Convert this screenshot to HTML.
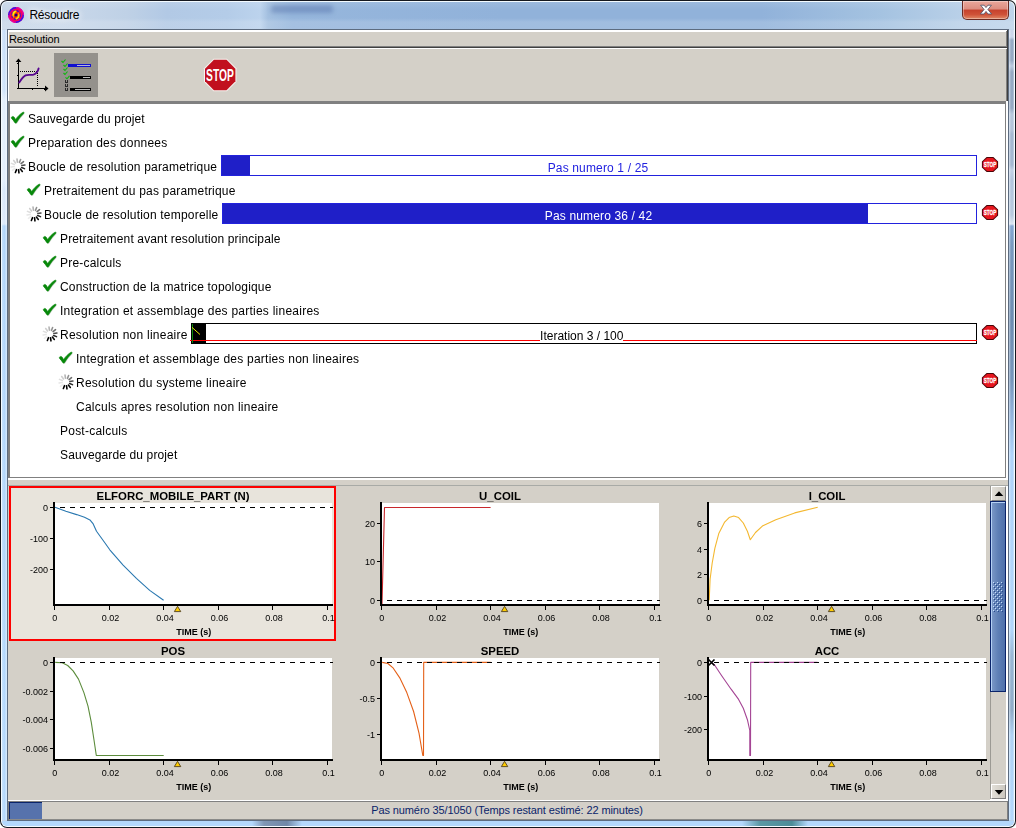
<!DOCTYPE html><html><head><meta charset="utf-8"><title>Résoudre</title><style>
*{box-sizing:border-box;margin:0;padding:0}
html,body{width:1016px;height:828px;overflow:hidden;background:#fff}
body{font-family:"Liberation Sans",sans-serif;font-size:12px;color:#000;position:relative}
.abs{position:absolute}
#win{position:absolute;left:0;top:0;width:1016px;height:828px;border-radius:7px 7px 7px 7px;background:#15181f;overflow:hidden}
#glass{position:absolute;left:1px;top:1px;right:1px;bottom:1px;border-radius:6px;background:#f4fbff}
#glass2{position:absolute;left:2px;top:2px;right:2px;bottom:2px;border-radius:5px;
 background:linear-gradient(180deg,rgba(255,255,255,.10) 0px,rgba(255,255,255,0) 8px,rgba(255,255,255,0) 16px,rgba(255,255,255,.14) 20px,rgba(255,255,255,.14) 27px,rgba(255,255,255,0) 28px),linear-gradient(90deg,#c8d7e8 0px,#c9d8ea 60px,#bfd1e6 125px,#b2c9e5 165px,#b4cce8 225px,#bcd3ed 258px,#a4c0e0 266px,#96b6dc 290px,#91b2da 500px,#91b2da 760px,#a5c3e1 880px,#b9d0e8 960px,#bed4ea 1012px)}
#blur1{position:absolute;left:271px;top:5px;width:62px;height:8px;background:rgba(70,100,160,.38);filter:blur(2px);border-radius:3px}
#sideL{position:absolute;left:2px;top:30px;width:5px;bottom:8px;background:linear-gradient(90deg,rgba(255,255,255,.25),rgba(255,255,255,0) 50%,rgba(255,255,255,.5) 100%),linear-gradient(180deg,#c8def8 0px,#cfe3fa 60px,#e2eefc 70px,#e2eefc 150px,#d8e8fb 160px,#dce9fb 194px,#b2d6fb 196px,#b4d8fc 100%)}
#sideR{position:absolute;left:1009px;top:30px;width:5px;bottom:8px;background:linear-gradient(90deg,rgba(255,255,255,.5),rgba(255,255,255,0) 40%,rgba(255,255,255,0) 80%,rgba(255,255,255,.45) 100%),linear-gradient(180deg,#ccd6ea 0px,#cdd7eb 7px,#98acc6 10px,#96aac4 30px,#bccbe0 36px,#96aac4 42px,#96aac4 78px,#b8c8dc 84px,#b4c4da 100px,#a5b9d2 104px,#a5b9d2 135px,#c3d2e6 140px,#b4c6de 150px,#b8cade 185px,#dbe5f2 194px,#86a8d4 196px,#7a9abf 215px,#6e8db2 290px,#7897bc 350px,#8fb0d8 380px,#b0d4fa 425px,#b2d6fb 600px,#9ab8d6 625px,#90acc8 680px,#b0d2f4 705px,#b4d8fc 100%)}
#sideB{position:absolute;left:2px;top:821px;width:1012px;height:5px;background:linear-gradient(90deg,#b4d8fc 250px,#8096b4 262px,#7088a8 285px,#b4d8fc 300px,#b4d8fc 740px,#5a98a4 758px,#4c8c98 790px,#b4d8fc 806px);border-radius:0 0 5px 5px}
#cframe{position:absolute;left:7px;top:29px;width:1002px;height:792px;background:#5d6c80}
#client{position:absolute;left:8px;top:30px;width:1000px;height:790px;background:#d4d0c8;overflow:hidden}
#title{position:absolute;left:29.5px;top:8px;font-size:12px;line-height:14px;letter-spacing:-0.3px;color:#000;text-shadow:0 0 6px #fff,0 0 8px #fff}
#close{position:absolute;left:962px;top:1px;width:47px;height:19px;border-radius:0 0 5px 5px;border:1px solid #6b2a22;border-top:none;
 background:linear-gradient(180deg,#eaa79b 0%,#dc8d80 45%,#c6412c 50%,#cf5238 75%,#e08966 100%);box-shadow:inset 0 0 0 1px rgba(255,255,255,.35)}
.row{will-change:transform;position:absolute;height:24px;line-height:24px;white-space:nowrap;font-size:12px;letter-spacing:0.25px;color:#000}
.pb{will-change:transform;position:absolute;height:21px;border:1px solid #2222dd;background:#fff;text-align:center;line-height:24px;font-size:12px;letter-spacing:0.15px;white-space:nowrap}
.pb .fill{position:absolute;left:0;top:0;bottom:0;background:#1f1fc8}
.pb span{position:relative;left:-1px}
</style></head><body>
<div id="win"><div id="glass"></div><div id="glass2"></div><div id="blur1"></div><div id="sideL"></div><div id="sideR"></div><div id="sideB"></div>
<svg class="abs" style="left:8px;top:7px" width="16" height="16" viewBox="0 0 16 16">
<circle cx="8" cy="8" r="7.9" fill="#f8005a"/>
<path d="M0.9 9.5 A7.3 7.3 0 0 1 9.5 0.9" stroke="#3a10f0" stroke-width="1.4" fill="none"/>
<path d="M15.1 6.5 A7.3 7.3 0 0 1 6.5 15.1" stroke="#3a10f0" stroke-width="1.4" fill="none"/>
<path d="M8 0.6 A7.4 7.4 0 0 1 15.4 8" stroke="#e800a0" stroke-width="1.2" fill="none"/>
<path d="M8 15.4 A7.4 7.4 0 0 1 0.6 8" stroke="#e800a0" stroke-width="1.2" fill="none"/>
<circle cx="8" cy="8" r="4.6" fill="#ff3010"/>
<circle cx="8" cy="8" r="4.3" fill="none" stroke="#4010c8" stroke-width="1.3" stroke-dasharray="2.2 1.2"/>
<path d="M7.6 3.6 C4.4 4.2 3.4 8 5.6 10.8 C5.4 8.2 6 5.6 8.6 4.4 Z" fill="#fff000"/>
<path d="M8.4 12.4 C11.6 11.8 12.6 8 10.4 5.2 C10.6 7.8 10 10.4 7.4 11.6 Z" fill="#ffd800"/>
<path d="M8.6 4.4 C7.4 5.2 6.6 6.6 6.6 8" stroke="#ff8000" stroke-width="0.8" fill="none"/>
<path d="M7.4 11.6 C8.6 10.8 9.4 9.4 9.4 8" stroke="#ff8000" stroke-width="0.8" fill="none"/>
<circle cx="8" cy="8" r="1.5" fill="#14087c"/>
</svg>
<div id="title">Résoudre</div>
<div id="close"><svg class="abs" style="left:16px;top:3px" width="14" height="12" viewBox="0 0 14 12"><path d="M1.6 1.2 L5.1 1.2 L7 3.6 L8.9 1.2 L12.4 1.2 L8.9 5.5 L12.6 10 L9 10 L7 7.4 L5 10 L1.4 10 L5.1 5.5 Z" fill="#fff" stroke="#4a4f66" stroke-width="0.8" stroke-linejoin="round"/></svg></div>
<div id="cframe"></div><div id="client">
<div class="abs" style="left:0px;top:0px;width:1000px;height:2px;background:#fff;"></div>
<div class="abs" style="left:0px;top:0px;width:1px;height:18px;background:#fff;"></div>
<div class="abs" style="left:0px;top:16px;width:1000px;height:1px;background:#808080;"></div>
<div class="abs" style="left:0px;top:17px;width:1000px;height:1px;background:#404040;"></div>
<div class="abs" style="left:998px;top:1px;width:1px;height:16px;background:#808080;"></div>
<div class="abs" style="left:999px;top:0px;width:1px;height:18px;background:#404040;"></div>
<div class="abs" style="left:1px;top:2px;font-size:11px;line-height:14px;letter-spacing:-0.15px">Resolution</div>
<div class="abs" style="left:0px;top:18px;width:1000px;height:1px;background:#fff;"></div>
<div class="abs" style="left:0px;top:18px;width:1px;height:53px;background:#fff;"></div>
<div class="abs" style="left:998px;top:19px;width:1px;height:52px;background:#808080;"></div>
<div class="abs" style="left:999px;top:18px;width:1px;height:53px;background:#404040;"></div>
<div class="abs" style="left:46px;top:23px;width:44px;height:44px;background:#94918c;"></div>
<svg class="abs" style="left:6px;top:24px" width="40" height="40" viewBox="14 54 40 40" shape-rendering="crispEdges">
<rect x="18" y="60" width="1" height="29" fill="#000"/><rect x="17" y="88" width="30" height="1" fill="#000"/>
<path d="M18.5 58.5 L15.6 62 L21.4 62 Z" fill="#000" shape-rendering="auto"/>
<path d="M48.5 88.5 L45 85.6 L45 91.4 Z" fill="#000" shape-rendering="auto"/>
<rect x="17" y="63" width="1" height="1" fill="#000"/><rect x="17" y="75" width="1" height="1" fill="#000"/>
<rect x="32" y="89" width="1" height="1" fill="#000"/><rect x="44" y="89" width="1" height="1" fill="#000"/>
<path d="M20 71.5 H37" stroke="#000" stroke-width="1" stroke-dasharray="1 1" fill="none"/>
<path d="M37.5 73 V87" stroke="#000" stroke-width="1" stroke-dasharray="1 1" fill="none"/>
<path d="M19.2 82.5 C21.5 79 23 76.5 25.5 75.3 C28 74.3 31 75.3 33.5 74.6 C36 73.8 37.8 72 38.6 68.5" stroke="#56058f" stroke-width="1.9" fill="none" shape-rendering="auto" stroke-linecap="round"/>
</svg>
<svg class="abs" style="left:46px;top:23px" width="44" height="44" viewBox="54 53 44 44" shape-rendering="crispEdges"><path d="M61.5 61.0 L63.0 62.5 L65.5 59.5" stroke="#0db80d" stroke-width="1.1" fill="none" shape-rendering="auto"/><path d="M63.5 65.0 L65.0 66.5 L67.5 63.5" stroke="#0db80d" stroke-width="1.1" fill="none" shape-rendering="auto"/><path d="M63.5 69.0 L65.0 70.5 L67.5 67.5" stroke="#0db80d" stroke-width="1.1" fill="none" shape-rendering="auto"/><path d="M63.5 73.0 L65.0 74.5 L67.5 71.5" stroke="#0db80d" stroke-width="1.1" fill="none" shape-rendering="auto"/><path d="M65.5 77.3 L67.0 78.8 L69.5 75.8" stroke="#0db80d" stroke-width="1.1" fill="none" shape-rendering="auto"/><rect x="68" y="64" width="23" height="3" fill="#1010d0"/><rect x="77" y="65" width="13" height="1" fill="#b4b4dc"/><rect x="70" y="76" width="21" height="3" fill="#000"/><rect x="83" y="77" width="7" height="1" fill="#bbb"/><rect x="70" y="88" width="21" height="3" fill="#000"/><rect x="75" y="89" width="15" height="1" fill="#bbb"/><path d="M65.5 80 V82.5 H67.5 V80" stroke="#2a2a2a" stroke-width="1" fill="none"/><path d="M65.5 84 V86.5 H67.5 V84" stroke="#2a2a2a" stroke-width="1" fill="none"/><path d="M65.5 88 V90.5 H67.5 V88" stroke="#2a2a2a" stroke-width="1" fill="none"/></svg>
<svg class="abs" style="left:195px;top:28px" width="34" height="34" viewBox="203 58 34 34">
<polygon points="236.40,81.71 226.91,91.20 213.49,91.20 204.00,81.71 204.00,68.29 213.49,58.80 226.91,58.80 236.40,68.29" fill="#f6f4f0"/>
<polygon points="235.40,81.30 226.50,90.20 213.90,90.20 205.00,81.30 205.00,68.70 213.90,59.80 226.50,59.80 235.40,68.70" fill="#c1101e"/>
<text x="220" y="80.9" text-anchor="middle" font-family="Liberation Sans, sans-serif" font-weight="bold" font-size="16.4" fill="#fff" textLength="27.8" lengthAdjust="spacingAndGlyphs">STOP</text>
</svg>
<div class="abs" style="left:0px;top:71px;width:1000px;height:3px;background:#808080;"></div>
<div class="abs" style="left:0px;top:71px;width:2px;height:377px;background:#808080;"></div>
<div class="abs" style="left:2px;top:74px;width:995px;height:373px;background:#fff;"></div>
<div class="abs" style="left:997px;top:74px;width:1px;height:374px;background:#808080;"></div>
<div class="abs" style="left:2px;top:447px;width:996px;height:1px;background:#808080;"></div>
<div class="abs" style="left:998px;top:71px;width:2px;height:379px;background:#fff;"></div>
<div class="abs" style="left:0px;top:448px;width:1000px;height:2px;background:#fff;"></div>
<div class="abs" style="left:0px;top:455px;width:1000px;height:1px;background:#a8aaa6;"></div>
<svg class="abs" style="left:1.6999999999999993px;top:81px" width="16" height="14" viewBox="-0.5 0 16 14"><path d="M1 7.4 C0.5 6.4 1.1 5.5 2.2 5.4 C2.9 5.3 3.4 5.7 3.8 6.3 L5 8.5 C7 5.5 9.6 2.9 12.9 0.9 L13.7 2 C10.6 4.8 8.2 8 6.2 11.5 C5.7 12.3 4.6 12.3 4.2 11.6 C3.4 10 2.2 8.6 1 7.4 Z" transform="translate(0.5,0.7)" fill="#6a7a6a" opacity="0.35"/><path d="M1 7.4 C0.5 6.4 1.1 5.5 2.2 5.4 C2.9 5.3 3.4 5.7 3.8 6.3 L5 8.5 C7 5.5 9.6 2.9 12.9 0.9 L13.7 2 C10.6 4.8 8.2 8 6.2 11.5 C5.7 12.3 4.6 12.3 4.2 11.6 C3.4 10 2.2 8.6 1 7.4 Z" fill="#07880a" stroke="#07880a" stroke-width="0.55" stroke-linejoin="round"/></svg>
<div class="row" style="left:20px;top:77px;letter-spacing:0.102px">Sauvegarde du projet</div>
<svg class="abs" style="left:1.6999999999999993px;top:105px" width="16" height="14" viewBox="-0.5 0 16 14"><path d="M1 7.4 C0.5 6.4 1.1 5.5 2.2 5.4 C2.9 5.3 3.4 5.7 3.8 6.3 L5 8.5 C7 5.5 9.6 2.9 12.9 0.9 L13.7 2 C10.6 4.8 8.2 8 6.2 11.5 C5.7 12.3 4.6 12.3 4.2 11.6 C3.4 10 2.2 8.6 1 7.4 Z" transform="translate(0.5,0.7)" fill="#6a7a6a" opacity="0.35"/><path d="M1 7.4 C0.5 6.4 1.1 5.5 2.2 5.4 C2.9 5.3 3.4 5.7 3.8 6.3 L5 8.5 C7 5.5 9.6 2.9 12.9 0.9 L13.7 2 C10.6 4.8 8.2 8 6.2 11.5 C5.7 12.3 4.6 12.3 4.2 11.6 C3.4 10 2.2 8.6 1 7.4 Z" fill="#07880a" stroke="#07880a" stroke-width="0.55" stroke-linejoin="round"/></svg>
<div class="row" style="left:20px;top:101px;letter-spacing:0.235px">Preparation des donnees</div>
<svg class="abs" style="left:0.6999999999999993px;top:127px" width="18" height="18" viewBox="0 0 18 18"><line x1="7.54" y1="12.62" x2="6.38" y2="15.49" stroke="#000" stroke-width="1.6" stroke-linecap="round"/><line x1="9.54" y1="12.86" x2="9.97" y2="15.93" stroke="#000" stroke-width="1.6" stroke-linecap="round"/><line x1="11.40" y1="12.07" x2="13.31" y2="14.52" stroke="#0a0a0a" stroke-width="1.6" stroke-linecap="round"/><line x1="12.62" y1="10.46" x2="15.49" y2="11.62" stroke="#2a2a2a" stroke-width="1.6" stroke-linecap="round"/><line x1="12.86" y1="8.46" x2="15.93" y2="8.03" stroke="#4a4a4a" stroke-width="1.6" stroke-linecap="round"/><line x1="12.07" y1="6.60" x2="14.52" y2="4.69" stroke="#6e6e6e" stroke-width="1.6" stroke-linecap="round"/><line x1="10.46" y1="5.38" x2="11.62" y2="2.51" stroke="#939393" stroke-width="1.6" stroke-linecap="round"/><line x1="8.46" y1="5.14" x2="8.03" y2="2.07" stroke="#b4b4b4" stroke-width="1.6" stroke-linecap="round"/><line x1="6.60" y1="5.93" x2="4.69" y2="3.48" stroke="#cfcfcf" stroke-width="1.6" stroke-linecap="round"/><line x1="5.38" y1="7.54" x2="2.51" y2="6.38" stroke="#dedede" stroke-width="1.6" stroke-linecap="round"/><line x1="5.14" y1="9.54" x2="2.07" y2="9.97" stroke="#e6e6e6" stroke-width="1.6" stroke-linecap="round"/><line x1="5.93" y1="11.40" x2="3.48" y2="13.31" stroke="#ececec" stroke-width="1.6" stroke-linecap="round"/></svg>
<div class="row" style="left:20px;top:125px;letter-spacing:0.194px">Boucle de resolution parametrique</div>
<svg class="abs" style="left:17.7px;top:153px" width="16" height="14" viewBox="-0.5 0 16 14"><path d="M1 7.4 C0.5 6.4 1.1 5.5 2.2 5.4 C2.9 5.3 3.4 5.7 3.8 6.3 L5 8.5 C7 5.5 9.6 2.9 12.9 0.9 L13.7 2 C10.6 4.8 8.2 8 6.2 11.5 C5.7 12.3 4.6 12.3 4.2 11.6 C3.4 10 2.2 8.6 1 7.4 Z" transform="translate(0.5,0.7)" fill="#6a7a6a" opacity="0.35"/><path d="M1 7.4 C0.5 6.4 1.1 5.5 2.2 5.4 C2.9 5.3 3.4 5.7 3.8 6.3 L5 8.5 C7 5.5 9.6 2.9 12.9 0.9 L13.7 2 C10.6 4.8 8.2 8 6.2 11.5 C5.7 12.3 4.6 12.3 4.2 11.6 C3.4 10 2.2 8.6 1 7.4 Z" fill="#07880a" stroke="#07880a" stroke-width="0.55" stroke-linejoin="round"/></svg>
<div class="row" style="left:36px;top:149px;letter-spacing:0.185px">Pretraitement du pas parametrique</div>
<svg class="abs" style="left:16.7px;top:175px" width="18" height="18" viewBox="0 0 18 18"><line x1="7.54" y1="12.62" x2="6.38" y2="15.49" stroke="#000" stroke-width="1.6" stroke-linecap="round"/><line x1="9.54" y1="12.86" x2="9.97" y2="15.93" stroke="#000" stroke-width="1.6" stroke-linecap="round"/><line x1="11.40" y1="12.07" x2="13.31" y2="14.52" stroke="#0a0a0a" stroke-width="1.6" stroke-linecap="round"/><line x1="12.62" y1="10.46" x2="15.49" y2="11.62" stroke="#2a2a2a" stroke-width="1.6" stroke-linecap="round"/><line x1="12.86" y1="8.46" x2="15.93" y2="8.03" stroke="#4a4a4a" stroke-width="1.6" stroke-linecap="round"/><line x1="12.07" y1="6.60" x2="14.52" y2="4.69" stroke="#6e6e6e" stroke-width="1.6" stroke-linecap="round"/><line x1="10.46" y1="5.38" x2="11.62" y2="2.51" stroke="#939393" stroke-width="1.6" stroke-linecap="round"/><line x1="8.46" y1="5.14" x2="8.03" y2="2.07" stroke="#b4b4b4" stroke-width="1.6" stroke-linecap="round"/><line x1="6.60" y1="5.93" x2="4.69" y2="3.48" stroke="#cfcfcf" stroke-width="1.6" stroke-linecap="round"/><line x1="5.38" y1="7.54" x2="2.51" y2="6.38" stroke="#dedede" stroke-width="1.6" stroke-linecap="round"/><line x1="5.14" y1="9.54" x2="2.07" y2="9.97" stroke="#e6e6e6" stroke-width="1.6" stroke-linecap="round"/><line x1="5.93" y1="11.40" x2="3.48" y2="13.31" stroke="#ececec" stroke-width="1.6" stroke-linecap="round"/></svg>
<div class="row" style="left:36px;top:173px;letter-spacing:0.203px">Boucle de resolution temporelle</div>
<svg class="abs" style="left:33.7px;top:201px" width="16" height="14" viewBox="-0.5 0 16 14"><path d="M1 7.4 C0.5 6.4 1.1 5.5 2.2 5.4 C2.9 5.3 3.4 5.7 3.8 6.3 L5 8.5 C7 5.5 9.6 2.9 12.9 0.9 L13.7 2 C10.6 4.8 8.2 8 6.2 11.5 C5.7 12.3 4.6 12.3 4.2 11.6 C3.4 10 2.2 8.6 1 7.4 Z" transform="translate(0.5,0.7)" fill="#6a7a6a" opacity="0.35"/><path d="M1 7.4 C0.5 6.4 1.1 5.5 2.2 5.4 C2.9 5.3 3.4 5.7 3.8 6.3 L5 8.5 C7 5.5 9.6 2.9 12.9 0.9 L13.7 2 C10.6 4.8 8.2 8 6.2 11.5 C5.7 12.3 4.6 12.3 4.2 11.6 C3.4 10 2.2 8.6 1 7.4 Z" fill="#07880a" stroke="#07880a" stroke-width="0.55" stroke-linejoin="round"/></svg>
<div class="row" style="left:52px;top:197px;letter-spacing:0.141px">Pretraitement avant resolution principale</div>
<svg class="abs" style="left:33.7px;top:225px" width="16" height="14" viewBox="-0.5 0 16 14"><path d="M1 7.4 C0.5 6.4 1.1 5.5 2.2 5.4 C2.9 5.3 3.4 5.7 3.8 6.3 L5 8.5 C7 5.5 9.6 2.9 12.9 0.9 L13.7 2 C10.6 4.8 8.2 8 6.2 11.5 C5.7 12.3 4.6 12.3 4.2 11.6 C3.4 10 2.2 8.6 1 7.4 Z" transform="translate(0.5,0.7)" fill="#6a7a6a" opacity="0.35"/><path d="M1 7.4 C0.5 6.4 1.1 5.5 2.2 5.4 C2.9 5.3 3.4 5.7 3.8 6.3 L5 8.5 C7 5.5 9.6 2.9 12.9 0.9 L13.7 2 C10.6 4.8 8.2 8 6.2 11.5 C5.7 12.3 4.6 12.3 4.2 11.6 C3.4 10 2.2 8.6 1 7.4 Z" fill="#07880a" stroke="#07880a" stroke-width="0.55" stroke-linejoin="round"/></svg>
<div class="row" style="left:52px;top:221px;letter-spacing:0.200px">Pre-calculs</div>
<svg class="abs" style="left:33.7px;top:249px" width="16" height="14" viewBox="-0.5 0 16 14"><path d="M1 7.4 C0.5 6.4 1.1 5.5 2.2 5.4 C2.9 5.3 3.4 5.7 3.8 6.3 L5 8.5 C7 5.5 9.6 2.9 12.9 0.9 L13.7 2 C10.6 4.8 8.2 8 6.2 11.5 C5.7 12.3 4.6 12.3 4.2 11.6 C3.4 10 2.2 8.6 1 7.4 Z" transform="translate(0.5,0.7)" fill="#6a7a6a" opacity="0.35"/><path d="M1 7.4 C0.5 6.4 1.1 5.5 2.2 5.4 C2.9 5.3 3.4 5.7 3.8 6.3 L5 8.5 C7 5.5 9.6 2.9 12.9 0.9 L13.7 2 C10.6 4.8 8.2 8 6.2 11.5 C5.7 12.3 4.6 12.3 4.2 11.6 C3.4 10 2.2 8.6 1 7.4 Z" fill="#07880a" stroke="#07880a" stroke-width="0.55" stroke-linejoin="round"/></svg>
<div class="row" style="left:52px;top:245px;letter-spacing:0.178px">Construction de la matrice topologique</div>
<svg class="abs" style="left:33.7px;top:273px" width="16" height="14" viewBox="-0.5 0 16 14"><path d="M1 7.4 C0.5 6.4 1.1 5.5 2.2 5.4 C2.9 5.3 3.4 5.7 3.8 6.3 L5 8.5 C7 5.5 9.6 2.9 12.9 0.9 L13.7 2 C10.6 4.8 8.2 8 6.2 11.5 C5.7 12.3 4.6 12.3 4.2 11.6 C3.4 10 2.2 8.6 1 7.4 Z" transform="translate(0.5,0.7)" fill="#6a7a6a" opacity="0.35"/><path d="M1 7.4 C0.5 6.4 1.1 5.5 2.2 5.4 C2.9 5.3 3.4 5.7 3.8 6.3 L5 8.5 C7 5.5 9.6 2.9 12.9 0.9 L13.7 2 C10.6 4.8 8.2 8 6.2 11.5 C5.7 12.3 4.6 12.3 4.2 11.6 C3.4 10 2.2 8.6 1 7.4 Z" fill="#07880a" stroke="#07880a" stroke-width="0.55" stroke-linejoin="round"/></svg>
<div class="row" style="left:52px;top:269px;letter-spacing:0.243px">Integration et assemblage des parties lineaires</div>
<svg class="abs" style="left:32.7px;top:295px" width="18" height="18" viewBox="0 0 18 18"><line x1="7.54" y1="12.62" x2="6.38" y2="15.49" stroke="#000" stroke-width="1.6" stroke-linecap="round"/><line x1="9.54" y1="12.86" x2="9.97" y2="15.93" stroke="#000" stroke-width="1.6" stroke-linecap="round"/><line x1="11.40" y1="12.07" x2="13.31" y2="14.52" stroke="#0a0a0a" stroke-width="1.6" stroke-linecap="round"/><line x1="12.62" y1="10.46" x2="15.49" y2="11.62" stroke="#2a2a2a" stroke-width="1.6" stroke-linecap="round"/><line x1="12.86" y1="8.46" x2="15.93" y2="8.03" stroke="#4a4a4a" stroke-width="1.6" stroke-linecap="round"/><line x1="12.07" y1="6.60" x2="14.52" y2="4.69" stroke="#6e6e6e" stroke-width="1.6" stroke-linecap="round"/><line x1="10.46" y1="5.38" x2="11.62" y2="2.51" stroke="#939393" stroke-width="1.6" stroke-linecap="round"/><line x1="8.46" y1="5.14" x2="8.03" y2="2.07" stroke="#b4b4b4" stroke-width="1.6" stroke-linecap="round"/><line x1="6.60" y1="5.93" x2="4.69" y2="3.48" stroke="#cfcfcf" stroke-width="1.6" stroke-linecap="round"/><line x1="5.38" y1="7.54" x2="2.51" y2="6.38" stroke="#dedede" stroke-width="1.6" stroke-linecap="round"/><line x1="5.14" y1="9.54" x2="2.07" y2="9.97" stroke="#e6e6e6" stroke-width="1.6" stroke-linecap="round"/><line x1="5.93" y1="11.40" x2="3.48" y2="13.31" stroke="#ececec" stroke-width="1.6" stroke-linecap="round"/></svg>
<div class="row" style="left:52px;top:293px;letter-spacing:0.243px">Resolution non lineaire</div>
<svg class="abs" style="left:49.7px;top:321px" width="16" height="14" viewBox="-0.5 0 16 14"><path d="M1 7.4 C0.5 6.4 1.1 5.5 2.2 5.4 C2.9 5.3 3.4 5.7 3.8 6.3 L5 8.5 C7 5.5 9.6 2.9 12.9 0.9 L13.7 2 C10.6 4.8 8.2 8 6.2 11.5 C5.7 12.3 4.6 12.3 4.2 11.6 C3.4 10 2.2 8.6 1 7.4 Z" transform="translate(0.5,0.7)" fill="#6a7a6a" opacity="0.35"/><path d="M1 7.4 C0.5 6.4 1.1 5.5 2.2 5.4 C2.9 5.3 3.4 5.7 3.8 6.3 L5 8.5 C7 5.5 9.6 2.9 12.9 0.9 L13.7 2 C10.6 4.8 8.2 8 6.2 11.5 C5.7 12.3 4.6 12.3 4.2 11.6 C3.4 10 2.2 8.6 1 7.4 Z" fill="#07880a" stroke="#07880a" stroke-width="0.55" stroke-linejoin="round"/></svg>
<div class="row" style="left:68px;top:317px;letter-spacing:0.231px">Integration et assemblage des parties non lineaires</div>
<svg class="abs" style="left:48.7px;top:343px" width="18" height="18" viewBox="0 0 18 18"><line x1="7.54" y1="12.62" x2="6.38" y2="15.49" stroke="#000" stroke-width="1.6" stroke-linecap="round"/><line x1="9.54" y1="12.86" x2="9.97" y2="15.93" stroke="#000" stroke-width="1.6" stroke-linecap="round"/><line x1="11.40" y1="12.07" x2="13.31" y2="14.52" stroke="#0a0a0a" stroke-width="1.6" stroke-linecap="round"/><line x1="12.62" y1="10.46" x2="15.49" y2="11.62" stroke="#2a2a2a" stroke-width="1.6" stroke-linecap="round"/><line x1="12.86" y1="8.46" x2="15.93" y2="8.03" stroke="#4a4a4a" stroke-width="1.6" stroke-linecap="round"/><line x1="12.07" y1="6.60" x2="14.52" y2="4.69" stroke="#6e6e6e" stroke-width="1.6" stroke-linecap="round"/><line x1="10.46" y1="5.38" x2="11.62" y2="2.51" stroke="#939393" stroke-width="1.6" stroke-linecap="round"/><line x1="8.46" y1="5.14" x2="8.03" y2="2.07" stroke="#b4b4b4" stroke-width="1.6" stroke-linecap="round"/><line x1="6.60" y1="5.93" x2="4.69" y2="3.48" stroke="#cfcfcf" stroke-width="1.6" stroke-linecap="round"/><line x1="5.38" y1="7.54" x2="2.51" y2="6.38" stroke="#dedede" stroke-width="1.6" stroke-linecap="round"/><line x1="5.14" y1="9.54" x2="2.07" y2="9.97" stroke="#e6e6e6" stroke-width="1.6" stroke-linecap="round"/><line x1="5.93" y1="11.40" x2="3.48" y2="13.31" stroke="#ececec" stroke-width="1.6" stroke-linecap="round"/></svg>
<div class="row" style="left:68px;top:341px;letter-spacing:0.245px">Resolution du systeme lineaire</div>
<div class="row" style="left:68px;top:365px;letter-spacing:0.246px">Calculs apres resolution non lineaire</div>
<div class="row" style="left:52px;top:389px;letter-spacing:0.229px">Post-calculs</div>
<div class="row" style="left:52px;top:413px;letter-spacing:0.132px">Sauvegarde du projet</div>
<div class="pb" style="left:213px;top:125px;width:756px;color:#2222e0"><div class="fill" style="width:28px"></div><span>Pas numero 1 / 25</span></div>
<div class="pb" style="left:214px;top:173px;width:755px;color:#fff"><div class="fill" style="width:645px"></div><span>Pas numero 36 / 42</span></div>
<div class="pb" style="left:183px;top:293px;width:786px;color:#000;border-color:#000"><div class="fill" style="width:14px;background:#000"></div><div class="abs" style="left:-2px;right:-1px;top:16px;height:1px;background:#ff0000"></div><div class="abs" style="left:0px;top:0;width:1px;height:19px;background:#0a8a0a"></div><svg class="abs" style="left:0;top:0" width="14" height="19"><line x1="-1" y1="2.5" x2="8" y2="10.5" stroke="#e6e600" stroke-width="1"/></svg><span style="background:#fff;letter-spacing:0px;margin-right:2.5px">Iteration 3 / 100</span></div>
<svg class="abs" style="left:973px;top:125px" width="18" height="18" viewBox="981 155 18 18">
<polygon points="986.64,157.00 993.36,157.00 998.10,161.39 998.10,167.61 993.36,172.00 986.64,172.00 981.90,167.61 981.90,161.39" fill="#4c0508"/>
<polygon points="987.06,158.00 992.94,158.00 997.10,161.81 997.10,167.19 992.94,171.00 987.06,171.00 982.90,167.19 982.90,161.81" fill="#e6161e"/>
<text x="990" y="167.3" text-anchor="middle" font-family="Liberation Sans, sans-serif" font-weight="bold" font-size="7.8" fill="#fff" stroke="#fff" stroke-width="0.3" textLength="12.6" lengthAdjust="spacingAndGlyphs">STOP</text>
</svg>
<svg class="abs" style="left:973px;top:173px" width="18" height="18" viewBox="981 203 18 18">
<polygon points="986.64,205.00 993.36,205.00 998.10,209.39 998.10,215.61 993.36,220.00 986.64,220.00 981.90,215.61 981.90,209.39" fill="#4c0508"/>
<polygon points="987.06,206.00 992.94,206.00 997.10,209.81 997.10,215.19 992.94,219.00 987.06,219.00 982.90,215.19 982.90,209.81" fill="#e6161e"/>
<text x="990" y="215.3" text-anchor="middle" font-family="Liberation Sans, sans-serif" font-weight="bold" font-size="7.8" fill="#fff" stroke="#fff" stroke-width="0.3" textLength="12.6" lengthAdjust="spacingAndGlyphs">STOP</text>
</svg>
<svg class="abs" style="left:973px;top:293px" width="18" height="18" viewBox="981 323 18 18">
<polygon points="986.64,325.00 993.36,325.00 998.10,329.39 998.10,335.61 993.36,340.00 986.64,340.00 981.90,335.61 981.90,329.39" fill="#4c0508"/>
<polygon points="987.06,326.00 992.94,326.00 997.10,329.81 997.10,335.19 992.94,339.00 987.06,339.00 982.90,335.19 982.90,329.81" fill="#e6161e"/>
<text x="990" y="335.3" text-anchor="middle" font-family="Liberation Sans, sans-serif" font-weight="bold" font-size="7.8" fill="#fff" stroke="#fff" stroke-width="0.3" textLength="12.6" lengthAdjust="spacingAndGlyphs">STOP</text>
</svg>
<svg class="abs" style="left:973px;top:341px" width="18" height="18" viewBox="981 371 18 18">
<polygon points="986.64,373.00 993.36,373.00 998.10,377.39 998.10,383.61 993.36,388.00 986.64,388.00 981.90,383.61 981.90,377.39" fill="#4c0508"/>
<polygon points="987.06,374.00 992.94,374.00 997.10,377.81 997.10,383.19 992.94,387.00 987.06,387.00 982.90,383.19 982.90,377.81" fill="#e6161e"/>
<text x="990" y="383.3" text-anchor="middle" font-family="Liberation Sans, sans-serif" font-weight="bold" font-size="7.8" fill="#fff" stroke="#fff" stroke-width="0.3" textLength="12.6" lengthAdjust="spacingAndGlyphs">STOP</text>
</svg>
<div class="abs" style="left:1px;top:456px;width:327px;height:155px;background:#e8e4dc;border:2px solid #fe0000"></div>
<div class="abs" style="left:982px;top:456px;width:1px;height:313px;background:#9c9a94;"></div>
<div class="abs" style="left:983px;top:456px;width:15px;height:313px;background:#d4d0c8;"></div>
<div class="abs" style="left:983px;top:456px;width:15px;height:15px;background:linear-gradient(90deg,#e2dfd8,#ccc8c0);border-top:1px solid #fff;border-left:1px solid #fff;border-right:1px solid #808080;border-bottom:1px solid #808080"></div>
<svg class="abs" style="left:986px;top:461px" width="10" height="6" viewBox="0 0 10 6"><path d="M5 0.3 L9.3 5 L0.7 5 Z" fill="#000"/></svg>
<div class="abs" style="left:982px;top:471px;width:16px;height:191px;background:linear-gradient(90deg,#7d9ac8,#5f80b6 50%,#4f70aa);border:1px solid #0a246a;box-shadow:inset 1px 1px 0 #b4d0f4"></div>
<svg class="abs" style="left:985px;top:552px" width="11" height="31" viewBox="0 0 11 31" shape-rendering="crispEdges"><rect x="0" y="0" width="1" height="1" fill="#c4dcfc"/><rect x="1" y="1" width="1" height="1" fill="#274a8e"/><rect x="4" y="0" width="1" height="1" fill="#c4dcfc"/><rect x="5" y="1" width="1" height="1" fill="#274a8e"/><rect x="8" y="0" width="1" height="1" fill="#c4dcfc"/><rect x="9" y="1" width="1" height="1" fill="#274a8e"/><rect x="2" y="2" width="1" height="1" fill="#c4dcfc"/><rect x="3" y="3" width="1" height="1" fill="#274a8e"/><rect x="6" y="2" width="1" height="1" fill="#c4dcfc"/><rect x="7" y="3" width="1" height="1" fill="#274a8e"/><rect x="0" y="4" width="1" height="1" fill="#c4dcfc"/><rect x="1" y="5" width="1" height="1" fill="#274a8e"/><rect x="4" y="4" width="1" height="1" fill="#c4dcfc"/><rect x="5" y="5" width="1" height="1" fill="#274a8e"/><rect x="8" y="4" width="1" height="1" fill="#c4dcfc"/><rect x="9" y="5" width="1" height="1" fill="#274a8e"/><rect x="2" y="6" width="1" height="1" fill="#c4dcfc"/><rect x="3" y="7" width="1" height="1" fill="#274a8e"/><rect x="6" y="6" width="1" height="1" fill="#c4dcfc"/><rect x="7" y="7" width="1" height="1" fill="#274a8e"/><rect x="0" y="8" width="1" height="1" fill="#c4dcfc"/><rect x="1" y="9" width="1" height="1" fill="#274a8e"/><rect x="4" y="8" width="1" height="1" fill="#c4dcfc"/><rect x="5" y="9" width="1" height="1" fill="#274a8e"/><rect x="8" y="8" width="1" height="1" fill="#c4dcfc"/><rect x="9" y="9" width="1" height="1" fill="#274a8e"/><rect x="2" y="10" width="1" height="1" fill="#c4dcfc"/><rect x="3" y="11" width="1" height="1" fill="#274a8e"/><rect x="6" y="10" width="1" height="1" fill="#c4dcfc"/><rect x="7" y="11" width="1" height="1" fill="#274a8e"/><rect x="0" y="12" width="1" height="1" fill="#c4dcfc"/><rect x="1" y="13" width="1" height="1" fill="#274a8e"/><rect x="4" y="12" width="1" height="1" fill="#c4dcfc"/><rect x="5" y="13" width="1" height="1" fill="#274a8e"/><rect x="8" y="12" width="1" height="1" fill="#c4dcfc"/><rect x="9" y="13" width="1" height="1" fill="#274a8e"/><rect x="2" y="14" width="1" height="1" fill="#c4dcfc"/><rect x="3" y="15" width="1" height="1" fill="#274a8e"/><rect x="6" y="14" width="1" height="1" fill="#c4dcfc"/><rect x="7" y="15" width="1" height="1" fill="#274a8e"/><rect x="0" y="16" width="1" height="1" fill="#c4dcfc"/><rect x="1" y="17" width="1" height="1" fill="#274a8e"/><rect x="4" y="16" width="1" height="1" fill="#c4dcfc"/><rect x="5" y="17" width="1" height="1" fill="#274a8e"/><rect x="8" y="16" width="1" height="1" fill="#c4dcfc"/><rect x="9" y="17" width="1" height="1" fill="#274a8e"/><rect x="2" y="18" width="1" height="1" fill="#c4dcfc"/><rect x="3" y="19" width="1" height="1" fill="#274a8e"/><rect x="6" y="18" width="1" height="1" fill="#c4dcfc"/><rect x="7" y="19" width="1" height="1" fill="#274a8e"/><rect x="0" y="20" width="1" height="1" fill="#c4dcfc"/><rect x="1" y="21" width="1" height="1" fill="#274a8e"/><rect x="4" y="20" width="1" height="1" fill="#c4dcfc"/><rect x="5" y="21" width="1" height="1" fill="#274a8e"/><rect x="8" y="20" width="1" height="1" fill="#c4dcfc"/><rect x="9" y="21" width="1" height="1" fill="#274a8e"/><rect x="2" y="22" width="1" height="1" fill="#c4dcfc"/><rect x="3" y="23" width="1" height="1" fill="#274a8e"/><rect x="6" y="22" width="1" height="1" fill="#c4dcfc"/><rect x="7" y="23" width="1" height="1" fill="#274a8e"/><rect x="0" y="24" width="1" height="1" fill="#c4dcfc"/><rect x="1" y="25" width="1" height="1" fill="#274a8e"/><rect x="4" y="24" width="1" height="1" fill="#c4dcfc"/><rect x="5" y="25" width="1" height="1" fill="#274a8e"/><rect x="8" y="24" width="1" height="1" fill="#c4dcfc"/><rect x="9" y="25" width="1" height="1" fill="#274a8e"/><rect x="2" y="26" width="1" height="1" fill="#c4dcfc"/><rect x="3" y="27" width="1" height="1" fill="#274a8e"/><rect x="6" y="26" width="1" height="1" fill="#c4dcfc"/><rect x="7" y="27" width="1" height="1" fill="#274a8e"/><rect x="0" y="28" width="1" height="1" fill="#c4dcfc"/><rect x="1" y="29" width="1" height="1" fill="#274a8e"/><rect x="4" y="28" width="1" height="1" fill="#c4dcfc"/><rect x="5" y="29" width="1" height="1" fill="#274a8e"/><rect x="8" y="28" width="1" height="1" fill="#c4dcfc"/><rect x="9" y="29" width="1" height="1" fill="#274a8e"/></svg>
<div class="abs" style="left:983px;top:754px;width:15px;height:15px;background:linear-gradient(90deg,#e2dfd8,#ccc8c0);border-top:1px solid #fff;border-left:1px solid #fff;border-right:1px solid #808080;border-bottom:1px solid #808080"></div>
<svg class="abs" style="left:986px;top:759px" width="10" height="6" viewBox="0 0 10 6"><path d="M5 5.7 L9.3 1 L0.7 1 Z" fill="#000"/></svg>
<div class="abs" style="left:998px;top:456px;width:2px;height:315px;background:#fff;"></div>
<div class="abs" style="left:0px;top:770px;width:1000px;height:1px;background:#fff;"></div>
<div class="abs" style="left:982px;top:769px;width:18px;height:1px;background:#fff;"></div>
<div class="abs" style="left:0px;top:789px;width:1000px;height:1px;background:#8a8a88;"></div>
<div class="abs" style="left:0px;top:771px;width:1000px;height:1px;background:#808080;"></div>
<div class="abs" style="left:0px;top:772px;width:1px;height:18px;background:#808080;"></div>
<div class="abs" style="left:999px;top:772px;width:1px;height:17px;background:#808080;"></div>
<div class="abs" style="left:1px;top:772px;width:33px;height:17px;background:#5672ac;border-top:1px solid #0a246a;border-left:1px solid #0a246a"></div>
<div class="abs" style="left:0;top:772px;width:1000px;height:17px;line-height:17px;text-align:center;font-size:11px;color:#0a246a;letter-spacing:-0.1px;padding-right:2px">Pas numéro 35/1050 (Temps restant estimé: 22 minutes)</div>
<svg class="abs" style="left:-8px;top:-30px;will-change:transform" width="1016" height="828" viewBox="0 0 1016 828" font-family="Liberation Sans, sans-serif">
<g shape-rendering="crispEdges">
<rect x="55" y="503" width="277" height="101" fill="#fff"/>
<rect x="53" y="502" width="2" height="104" fill="#000"/>
<rect x="53" y="604" width="280" height="2" fill="#000"/>
<rect x="54" y="606" width="1" height="4" fill="#000"/>
<rect x="109" y="606" width="1" height="4" fill="#000"/>
<rect x="163" y="606" width="1" height="4" fill="#000"/>
<rect x="218" y="606" width="1" height="4" fill="#000"/>
<rect x="272" y="606" width="1" height="4" fill="#000"/>
<rect x="327" y="606" width="1" height="4" fill="#000"/>
<rect x="50" y="507" width="3" height="1" fill="#000"/>
<rect x="50" y="538" width="3" height="1" fill="#000"/>
<rect x="50" y="569" width="3" height="1" fill="#000"/>
</g>
<polyline points="55,507.3 65.9,511.3 76.6,514.6 84.5,517.3 89.9,519.9 93.2,523.9 96.5,531.2 103.2,540.5 109.8,549.8 123.1,565.1 136.4,578.4 149.7,590.4 163.6,600.3" fill="none" stroke="#2a78b0" stroke-width="1.1" stroke-linejoin="round"/>
<path d="M50 507.5 H333" stroke="#000" stroke-width="1" stroke-dasharray="5 5" fill="none" shape-rendering="crispEdges"/>
<rect x="53" y="502" width="2" height="104" fill="#000" shape-rendering="crispEdges"/>
<path d="M177.56 606.3 L180.76 611.6 L174.36 611.6 Z" fill="#ffcc00" stroke="#50401c" stroke-width="0.9" stroke-linejoin="round"/>
<text x="54.8" y="621.3" font-size="9" text-anchor="middle" fill="#000">0</text>
<text x="110.4" y="621.3" font-size="9" text-anchor="middle" fill="#000">0.02</text>
<text x="164.9" y="621.3" font-size="9" text-anchor="middle" fill="#000">0.04</text>
<text x="219.5" y="621.3" font-size="9" text-anchor="middle" fill="#000">0.06</text>
<text x="274.0" y="621.3" font-size="9" text-anchor="middle" fill="#000">0.08</text>
<text x="328.6" y="621.3" font-size="9" text-anchor="middle" fill="#000">0.1</text>
<text x="48" y="510.8" font-size="9" text-anchor="end" fill="#000">0</text>
<text x="48" y="541.8" font-size="9" text-anchor="end" fill="#000">-100</text>
<text x="48" y="572.8" font-size="9" text-anchor="end" fill="#000">-200</text>
<text x="193.7" y="635.2" font-size="9" font-weight="bold" text-anchor="middle" fill="#000">TIME (s)</text>
<text x="173" y="500" font-size="11.4" font-weight="bold" text-anchor="middle" fill="#000">ELFORC_MOBILE_PART (N)</text>
<g shape-rendering="crispEdges">
<rect x="382" y="503" width="277" height="101" fill="#fff"/>
<rect x="380" y="502" width="2" height="104" fill="#000"/>
<rect x="380" y="604" width="280" height="2" fill="#000"/>
<rect x="381" y="606" width="1" height="4" fill="#000"/>
<rect x="436" y="606" width="1" height="4" fill="#000"/>
<rect x="490" y="606" width="1" height="4" fill="#000"/>
<rect x="545" y="606" width="1" height="4" fill="#000"/>
<rect x="599" y="606" width="1" height="4" fill="#000"/>
<rect x="654" y="606" width="1" height="4" fill="#000"/>
<rect x="377" y="600" width="3" height="1" fill="#000"/>
<rect x="377" y="561" width="3" height="1" fill="#000"/>
<rect x="377" y="523" width="3" height="1" fill="#000"/>
</g>
<polyline points="382,604 384.5,507.5 490.6,507.5" fill="none" stroke="#c8282c" stroke-width="1.1" stroke-linejoin="round"/>
<path d="M377 600.5 H660" stroke="#000" stroke-width="1" stroke-dasharray="5 5" fill="none" shape-rendering="crispEdges"/>
<rect x="380" y="502" width="2" height="104" fill="#000" shape-rendering="crispEdges"/>
<path d="M504.56 606.3 L507.76 611.6 L501.36 611.6 Z" fill="#ffcc00" stroke="#50401c" stroke-width="0.9" stroke-linejoin="round"/>
<text x="381.8" y="621.3" font-size="9" text-anchor="middle" fill="#000">0</text>
<text x="437.4" y="621.3" font-size="9" text-anchor="middle" fill="#000">0.02</text>
<text x="491.9" y="621.3" font-size="9" text-anchor="middle" fill="#000">0.04</text>
<text x="546.5" y="621.3" font-size="9" text-anchor="middle" fill="#000">0.06</text>
<text x="601.0" y="621.3" font-size="9" text-anchor="middle" fill="#000">0.08</text>
<text x="655.6" y="621.3" font-size="9" text-anchor="middle" fill="#000">0.1</text>
<text x="375" y="603.8" font-size="9" text-anchor="end" fill="#000">0</text>
<text x="375" y="565.3" font-size="9" text-anchor="end" fill="#000">10</text>
<text x="375" y="526.8" font-size="9" text-anchor="end" fill="#000">20</text>
<text x="520.7" y="635.2" font-size="9" font-weight="bold" text-anchor="middle" fill="#000">TIME (s)</text>
<text x="500" y="500" font-size="11.4" font-weight="bold" text-anchor="middle" fill="#000">U_COIL</text>
<g shape-rendering="crispEdges">
<rect x="709" y="503" width="277" height="101" fill="#fff"/>
<rect x="707" y="502" width="2" height="104" fill="#000"/>
<rect x="707" y="604" width="280" height="2" fill="#000"/>
<rect x="708" y="606" width="1" height="4" fill="#000"/>
<rect x="763" y="606" width="1" height="4" fill="#000"/>
<rect x="817" y="606" width="1" height="4" fill="#000"/>
<rect x="872" y="606" width="1" height="4" fill="#000"/>
<rect x="926" y="606" width="1" height="4" fill="#000"/>
<rect x="981" y="606" width="1" height="4" fill="#000"/>
<rect x="704" y="600" width="3" height="1" fill="#000"/>
<rect x="704" y="574" width="3" height="1" fill="#000"/>
<rect x="704" y="549" width="3" height="1" fill="#000"/>
<rect x="704" y="523" width="3" height="1" fill="#000"/>
</g>
<polyline points="709.2,600.2 710.1,579.2 712.2,563 714.9,548.1 718.9,533.2 724.4,522.4 729.1,517.6 733.8,516 738.6,517.6 743.3,523 747.4,531.2 750.3,539.7 755.5,532.5 762.9,525.7 775.8,519.7 794.7,512.9 817.7,507.2" fill="none" stroke="#f4b830" stroke-width="1.1" stroke-linejoin="round"/>
<path d="M704 600.5 H987" stroke="#000" stroke-width="1" stroke-dasharray="5 5" fill="none" shape-rendering="crispEdges"/>
<rect x="707" y="502" width="2" height="104" fill="#000" shape-rendering="crispEdges"/>
<path d="M831.56 606.3 L834.76 611.6 L828.3599999999999 611.6 Z" fill="#ffcc00" stroke="#50401c" stroke-width="0.9" stroke-linejoin="round"/>
<text x="708.8" y="621.3" font-size="9" text-anchor="middle" fill="#000">0</text>
<text x="764.4" y="621.3" font-size="9" text-anchor="middle" fill="#000">0.02</text>
<text x="818.9" y="621.3" font-size="9" text-anchor="middle" fill="#000">0.04</text>
<text x="873.5" y="621.3" font-size="9" text-anchor="middle" fill="#000">0.06</text>
<text x="928.0" y="621.3" font-size="9" text-anchor="middle" fill="#000">0.08</text>
<text x="982.6" y="621.3" font-size="9" text-anchor="middle" fill="#000">0.1</text>
<text x="702" y="603.8" font-size="9" text-anchor="end" fill="#000">0</text>
<text x="702" y="578.3" font-size="9" text-anchor="end" fill="#000">2</text>
<text x="702" y="552.8" font-size="9" text-anchor="end" fill="#000">4</text>
<text x="702" y="526.8" font-size="9" text-anchor="end" fill="#000">6</text>
<text x="847.7" y="635.2" font-size="9" font-weight="bold" text-anchor="middle" fill="#000">TIME (s)</text>
<text x="827" y="500" font-size="11.4" font-weight="bold" text-anchor="middle" fill="#000">I_COIL</text>
<g shape-rendering="crispEdges">
<rect x="55" y="658" width="277" height="101" fill="#fff"/>
<rect x="53" y="657" width="2" height="104" fill="#000"/>
<rect x="53" y="759" width="280" height="2" fill="#000"/>
<rect x="54" y="761" width="1" height="4" fill="#000"/>
<rect x="109" y="761" width="1" height="4" fill="#000"/>
<rect x="163" y="761" width="1" height="4" fill="#000"/>
<rect x="218" y="761" width="1" height="4" fill="#000"/>
<rect x="272" y="761" width="1" height="4" fill="#000"/>
<rect x="327" y="761" width="1" height="4" fill="#000"/>
<rect x="50" y="662" width="3" height="1" fill="#000"/>
<rect x="50" y="691" width="3" height="1" fill="#000"/>
<rect x="50" y="719" width="3" height="1" fill="#000"/>
<rect x="50" y="748" width="3" height="1" fill="#000"/>
</g>
<polyline points="55.2,662.4 62.2,662.8 67.7,665.5 73.1,670.9 78.5,679.1 83.9,692.6 88,706.1 91.3,722.4 94,740 96.3,755.5 163.7,755.5" fill="none" stroke="#5c8c3c" stroke-width="1.1" stroke-linejoin="round"/>
<path d="M50 662.5 H333" stroke="#000" stroke-width="1" stroke-dasharray="5 5" fill="none" shape-rendering="crispEdges"/>
<rect x="53" y="657" width="2" height="104" fill="#000" shape-rendering="crispEdges"/>
<path d="M177.56 761.3 L180.76 766.6 L174.36 766.6 Z" fill="#ffcc00" stroke="#50401c" stroke-width="0.9" stroke-linejoin="round"/>
<text x="54.8" y="776.3" font-size="9" text-anchor="middle" fill="#000">0</text>
<text x="110.4" y="776.3" font-size="9" text-anchor="middle" fill="#000">0.02</text>
<text x="164.9" y="776.3" font-size="9" text-anchor="middle" fill="#000">0.04</text>
<text x="219.5" y="776.3" font-size="9" text-anchor="middle" fill="#000">0.06</text>
<text x="274.0" y="776.3" font-size="9" text-anchor="middle" fill="#000">0.08</text>
<text x="328.6" y="776.3" font-size="9" text-anchor="middle" fill="#000">0.1</text>
<text x="48" y="665.8" font-size="9" text-anchor="end" fill="#000">0</text>
<text x="48" y="694.8" font-size="9" text-anchor="end" fill="#000">-0.002</text>
<text x="48" y="723.3" font-size="9" text-anchor="end" fill="#000">-0.004</text>
<text x="48" y="752.3" font-size="9" text-anchor="end" fill="#000">-0.006</text>
<text x="193.7" y="790.2" font-size="9" font-weight="bold" text-anchor="middle" fill="#000">TIME (s)</text>
<text x="173" y="655" font-size="11.4" font-weight="bold" text-anchor="middle" fill="#000">POS</text>
<g shape-rendering="crispEdges">
<rect x="382" y="658" width="277" height="101" fill="#fff"/>
<rect x="380" y="657" width="2" height="104" fill="#000"/>
<rect x="380" y="759" width="280" height="2" fill="#000"/>
<rect x="381" y="761" width="1" height="4" fill="#000"/>
<rect x="436" y="761" width="1" height="4" fill="#000"/>
<rect x="490" y="761" width="1" height="4" fill="#000"/>
<rect x="545" y="761" width="1" height="4" fill="#000"/>
<rect x="599" y="761" width="1" height="4" fill="#000"/>
<rect x="654" y="761" width="1" height="4" fill="#000"/>
<rect x="377" y="662" width="3" height="1" fill="#000"/>
<rect x="377" y="698" width="3" height="1" fill="#000"/>
<rect x="377" y="734" width="3" height="1" fill="#000"/>
</g>
<polyline points="382.2,662.4 387.9,663.5 393.3,668.2 400.1,678.4 406.8,692.6 413.6,711.5 419,733.2 422.8,755.5 423.5,755.5 423.7,662.4 490.6,662.4" fill="none" stroke="#e46018" stroke-width="1.1" stroke-linejoin="round"/>
<path d="M377 662.5 H660" stroke="#000" stroke-width="1" stroke-dasharray="5 5" fill="none" shape-rendering="crispEdges"/>
<rect x="380" y="657" width="2" height="104" fill="#000" shape-rendering="crispEdges"/>
<path d="M504.56 761.3 L507.76 766.6 L501.36 766.6 Z" fill="#ffcc00" stroke="#50401c" stroke-width="0.9" stroke-linejoin="round"/>
<text x="381.8" y="776.3" font-size="9" text-anchor="middle" fill="#000">0</text>
<text x="437.4" y="776.3" font-size="9" text-anchor="middle" fill="#000">0.02</text>
<text x="491.9" y="776.3" font-size="9" text-anchor="middle" fill="#000">0.04</text>
<text x="546.5" y="776.3" font-size="9" text-anchor="middle" fill="#000">0.06</text>
<text x="601.0" y="776.3" font-size="9" text-anchor="middle" fill="#000">0.08</text>
<text x="655.6" y="776.3" font-size="9" text-anchor="middle" fill="#000">0.1</text>
<text x="375" y="665.8" font-size="9" text-anchor="end" fill="#000">0</text>
<text x="375" y="702.3" font-size="9" text-anchor="end" fill="#000">-0.5</text>
<text x="375" y="738.3" font-size="9" text-anchor="end" fill="#000">-1</text>
<text x="520.7" y="790.2" font-size="9" font-weight="bold" text-anchor="middle" fill="#000">TIME (s)</text>
<text x="500" y="655" font-size="11.4" font-weight="bold" text-anchor="middle" fill="#000">SPEED</text>
<g shape-rendering="crispEdges">
<rect x="709" y="658" width="277" height="101" fill="#fff"/>
<rect x="707" y="657" width="2" height="104" fill="#000"/>
<rect x="707" y="759" width="280" height="2" fill="#000"/>
<rect x="708" y="761" width="1" height="4" fill="#000"/>
<rect x="763" y="761" width="1" height="4" fill="#000"/>
<rect x="817" y="761" width="1" height="4" fill="#000"/>
<rect x="872" y="761" width="1" height="4" fill="#000"/>
<rect x="926" y="761" width="1" height="4" fill="#000"/>
<rect x="981" y="761" width="1" height="4" fill="#000"/>
<rect x="704" y="662" width="3" height="1" fill="#000"/>
<rect x="704" y="696" width="3" height="1" fill="#000"/>
<rect x="704" y="729" width="3" height="1" fill="#000"/>
</g>
<polyline points="711.5,662.4 714.9,665.5 721.7,675.7 731.1,689.2 738.6,699.4 743.3,708.2 747.4,719.7 749.8,730.5 749.8,755.5 750.5,755.5 750.7,662.4 817.5,662.4" fill="none" stroke="#a44494" stroke-width="1.1" stroke-linejoin="round"/>
<path d="M704 662.5 H987" stroke="#000" stroke-width="1" stroke-dasharray="5 5" fill="none" shape-rendering="crispEdges"/>
<rect x="707" y="657" width="2" height="104" fill="#000" shape-rendering="crispEdges"/>
<path d="M708.5 659.5 L714.5 665.5 M708.5 665.5 L714.5 659.5" stroke="#000" stroke-width="1.6" fill="none"/>
<path d="M831.56 761.3 L834.76 766.6 L828.3599999999999 766.6 Z" fill="#ffcc00" stroke="#50401c" stroke-width="0.9" stroke-linejoin="round"/>
<text x="708.8" y="776.3" font-size="9" text-anchor="middle" fill="#000">0</text>
<text x="764.4" y="776.3" font-size="9" text-anchor="middle" fill="#000">0.02</text>
<text x="818.9" y="776.3" font-size="9" text-anchor="middle" fill="#000">0.04</text>
<text x="873.5" y="776.3" font-size="9" text-anchor="middle" fill="#000">0.06</text>
<text x="928.0" y="776.3" font-size="9" text-anchor="middle" fill="#000">0.08</text>
<text x="982.6" y="776.3" font-size="9" text-anchor="middle" fill="#000">0.1</text>
<text x="702" y="665.8" font-size="9" text-anchor="end" fill="#000">0</text>
<text x="702" y="700.3" font-size="9" text-anchor="end" fill="#000">-100</text>
<text x="702" y="733.3" font-size="9" text-anchor="end" fill="#000">-200</text>
<text x="847.7" y="790.2" font-size="9" font-weight="bold" text-anchor="middle" fill="#000">TIME (s)</text>
<text x="827" y="655" font-size="11.4" font-weight="bold" text-anchor="middle" fill="#000">ACC</text>
</svg>
</div></div></body></html>
